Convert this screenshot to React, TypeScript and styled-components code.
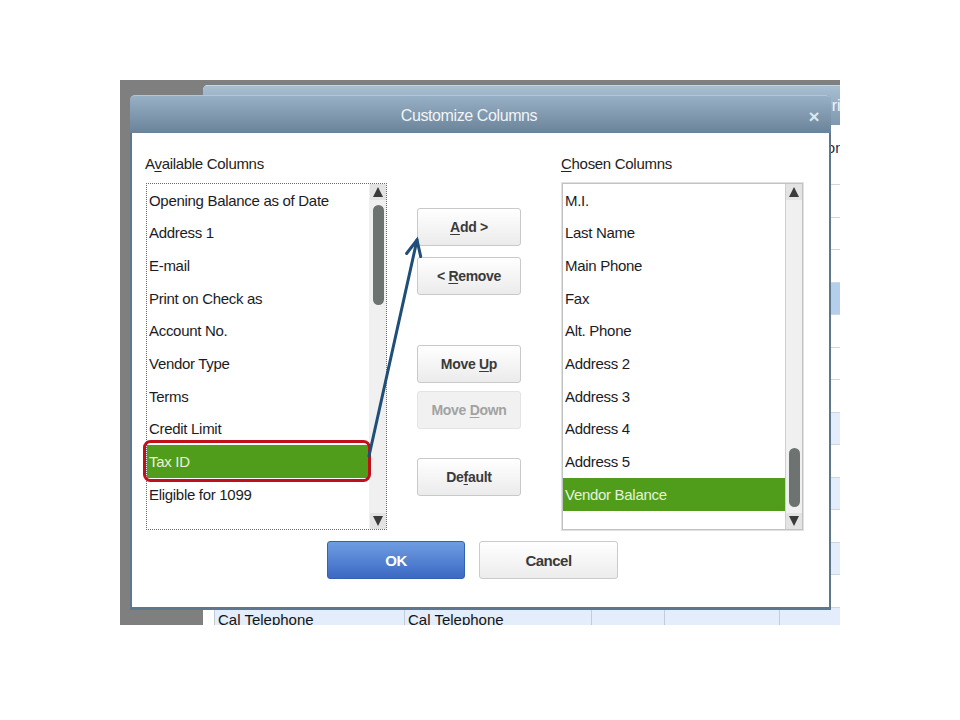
import styled, { createGlobalStyle } from "styled-components";

const GlobalStyle = createGlobalStyle`
  html, body {
    margin: 0;
    padding: 0;
    background: #ffffff;
  }
  body {
    font-family: "Liberation Sans", Arial, sans-serif;
  }
`;

const availableColumns = [
  "Opening Balance as of Date",
  "Address 1",
  "E-mail",
  "Print on Check as",
  "Account No.",
  "Vendor Type",
  "Terms",
  "Credit Limit",
  "Tax ID",
  "Eligible for 1099",
];

const chosenColumns = [
  "M.I.",
  "Last Name",
  "Main Phone",
  "Fax",
  "Alt. Phone",
  "Address 2",
  "Address 3",
  "Address 4",
  "Address 5",
  "Vendor Balance",
];

// widths of the columns in the window behind the dialog
const backCols = [12, 190, 187, 73, 115, 183];

const Page = styled.div`
  position: relative;
  width: 960px;
  height: 720px;
  padding: 80px 0 0 120px;
  box-sizing: border-box;
  background: #ffffff;
`;

const Desktop = styled.div`
  position: relative;
  width: 720px;
  height: 545px;
  background: #7f7f7f;
  overflow: hidden;
`;

/* ---------- window behind the dialog ---------- */

const BackWindow = styled.div`
  position: absolute;
  left: 83px;
  top: 5px;
  width: 760px;
  height: 600px;
  display: flex;
  flex-direction: column;
  background: #ffffff;
  border-radius: 5px 5px 0 0;
  overflow: hidden;
`;

const BackTitle = styled.div`
  flex: none;
  height: 40px;
  box-sizing: border-box;
  display: flex;
  align-items: center;
  padding-left: 618px;
  background: linear-gradient(#a8bed2, #7f98ae);
  border-top: 1px solid #c6d5e3;
  color: #f3f6f9;
  font-size: 16px;
`;

const BackHeadRow = styled.div`
  flex: none;
  height: 60px;
  box-sizing: border-box;
  display: flex;
  border-bottom: 1px solid #d3d7dc;
`;

const BackHeadCell = styled.div<{ $w: number }>`
  flex: none;
  width: ${({ $w }) => $w}px;
  box-sizing: border-box;
  padding: 14px 0 0 24px;
  color: #1b2a4a;
  font-size: 15px;
  white-space: nowrap;
  overflow: hidden;
`;

const BackRow = styled.div<{ $tone: "plain" | "light" | "selected" }>`
  flex: none;
  height: 32.5px;
  box-sizing: border-box;
  display: flex;
  border-bottom: 1px solid #cfd6df;
  background: ${({ $tone }) =>
    $tone === "selected" ? "#b5cfeb" : $tone === "light" ? "#e3edfb" : "#ffffff"};
`;

const BackCell = styled.div<{ $w: number }>`
  flex: none;
  width: ${({ $w }) => $w}px;
  box-sizing: border-box;
  border-right: 1px solid #c3ccd7;
  padding: 3px 0 0 3px;
  color: #141414;
  font-size: 15px;
  white-space: nowrap;
  overflow: hidden;
  &:first-child {
    background: #ffffff;
  }
`;

/* ---------- dialog ---------- */

const Dialog = styled.div`
  position: absolute;
  left: 10px;
  top: 15px;
  width: 701px;
  height: 515px;
  box-sizing: border-box;
  padding: 0 2px 3px 2px;
  display: flex;
  flex-direction: column;
  background: #5d778e;
  border-radius: 5px 5px 0 0;
`;

const TitleBar = styled.div`
  flex: none;
  height: 38px;
  margin: 0 -2px;
  padding-top: 3px;
  display: flex;
  align-items: center;
  border-radius: 5px 5px 0 0;
  background: linear-gradient(#97b0c6, #6a8399);
  border-top: 1px solid #b3c6d6;
  box-sizing: border-box;
`;

const TitleText = styled.div`
  flex: 1;
  padding-left: 11px;
  text-align: center;
  color: #f1f4f7;
  font-size: 16px;
  letter-spacing: -0.4px;
`;

const CloseButton = styled.div`
  flex: none;
  width: 34px;
  text-align: center;
  color: #dfe6ec;
  font-size: 19px;
  font-weight: bold;
  line-height: 1;
`;

const Body = styled.div`
  flex: 1;
  display: flex;
  flex-direction: column;
  background: #ffffff;
  padding: 22px 26px 0 14px;
`;

const Columns = styled.div`
  display: flex;
  align-items: flex-start;
`;

const ListColumn = styled.div`
  flex: none;
  width: 241px;
  display: flex;
  flex-direction: column;
`;

const Label = styled.div`
  height: 18px;
  line-height: 18px;
  margin: 0 0 10px -1px;
  color: #222222;
  font-size: 15px;
  letter-spacing: -0.3px;
`;

const Key = styled.span`
  text-decoration: underline;
  text-underline-offset: 2px;
`;

const ListBox = styled.div<{ $dotted?: boolean }>`
  height: 347px;
  box-sizing: border-box;
  display: flex;
  border: 1px ${({ $dotted }) => ($dotted ? "dotted #6a6a6a" : "solid #c2c2c2")};
  outline: ${({ $dotted }) => ($dotted ? "none" : "1px solid #e1e1e1")};
  background: #ffffff;
`;

const Items = styled.div`
  flex: 1;
  display: flex;
  flex-direction: column;
  overflow: hidden;
`;

const Item = styled.div<{ $selected?: boolean }>`
  flex: none;
  height: 32.67px;
  display: flex;
  align-items: center;
  padding-left: 2px;
  font-size: 15px;
  letter-spacing: -0.3px;
  white-space: nowrap;
  color: ${({ $selected }) => ($selected ? "#e6f2da" : "#1b1b27")};
  background: ${({ $selected }) => ($selected ? "#4f9d1b" : "transparent")};
`;

const Scrollbar = styled.div<{ $line?: boolean }>`
  flex: none;
  width: 16px;
  display: flex;
  flex-direction: column;
  background: #f0f0f0;
  border-left: 1px solid ${({ $line }) => ($line ? "#cfcfcf" : "#f0f0f0")};
`;

const ArrowButton = styled.div`
  flex: none;
  height: 16px;
  display: flex;
  align-items: center;
  justify-content: center;
  background: #e3e3e3;
`;

const Triangle = styled.div<{ $down?: boolean }>`
  width: 0;
  height: 0;
  border-left: 5px solid transparent;
  border-right: 5px solid transparent;
  ${({ $down }) =>
    $down ? "border-top: 10px solid #3a3a3a;" : "border-bottom: 10px solid #3a3a3a;"}
`;

const Track = styled.div`
  flex: 1;
  display: flex;
  flex-direction: column;
  align-items: center;
`;

const Thumb = styled.div<{ $top: number; $height: number }>`
  width: 11px;
  margin-top: ${({ $top }) => $top}px;
  height: ${({ $height }) => $height}px;
  border-radius: 6px;
  background: #6d7371;
`;

const ButtonColumn = styled.div`
  flex: none;
  width: 104px;
  margin: 0 41px 0 30px;
  padding-top: 53px;
  display: flex;
  flex-direction: column;
`;

const SideButton = styled.div<{ $mt: number; $disabled?: boolean }>`
  height: 38px;
  margin-top: ${({ $mt }) => $mt}px;
  box-sizing: border-box;
  display: flex;
  align-items: center;
  justify-content: center;
  border-radius: 3px;
  border: 1px solid ${({ $disabled }) => ($disabled ? "#e3e3e3" : "#c9c9c9")};
  background: ${({ $disabled }) =>
    $disabled ? "#f1f1f1" : "linear-gradient(#ffffff, #ebebeb)"};
  color: ${({ $disabled }) => ($disabled ? "#a2a2a2" : "#3a3a3a")};
  font-size: 14px;
  font-weight: bold;
  letter-spacing: -0.3px;
`;

const Footer = styled.div`
  display: flex;
  gap: 14px;
  margin-top: 11px;
  padding-left: 181px;
`;

const FooterButton = styled.div<{ $primary?: boolean; $w: number }>`
  width: ${({ $w }) => $w}px;
  height: 38px;
  box-sizing: border-box;
  display: flex;
  align-items: center;
  justify-content: center;
  border-radius: 3px;
  border: 1px solid ${({ $primary }) => ($primary ? "#3561b2" : "#cbcbcb")};
  background: ${({ $primary }) =>
    $primary ? "linear-gradient(#6f9de2, #3b69c4)" : "linear-gradient(#ffffff, #ececec)"};
  color: ${({ $primary }) => ($primary ? "#ffffff" : "#3a3a3a")};
  font-size: 15px;
  font-weight: bold;
  letter-spacing: -0.5px;
`;

const Annotation = styled.svg`
  position: absolute;
  left: 0;
  top: 0;
  pointer-events: none;
`;

const backRowCount = 14;

function toneFor(i: number): "plain" | "light" | "selected" {
  if (i === 3) return "selected";
  if (i < 7) return "plain";
  return i % 2 === 1 ? "light" : "plain";
}

const App = () => {
  return (
    <Page>
      <GlobalStyle />
      <Desktop>
        <BackWindow>
          <BackTitle>Print</BackTitle>
          <BackHeadRow>
            {backCols.map((w, i) => (
              <BackHeadCell key={i} $w={w}>
                {i === 5 ? "Contact" : ""}
              </BackHeadCell>
            ))}
          </BackHeadRow>
          {Array.from({ length: backRowCount }).map((_, r) => (
            <BackRow key={r} $tone={toneFor(r)}>
              {backCols.map((w, c) => (
                <BackCell key={c} $w={w}>
                  {r === backRowCount - 1 && (c === 1 || c === 2) ? "Cal Telephone" : ""}
                </BackCell>
              ))}
            </BackRow>
          ))}
        </BackWindow>

        <Dialog>
          <TitleBar>
            <TitleText>Customize Columns</TitleText>
            <CloseButton>×</CloseButton>
          </TitleBar>
          <Body>
            <Columns>
              <ListColumn>
                <Label>
                  A<Key>v</Key>ailable Columns
                </Label>
                <ListBox $dotted>
                  <Items>
                    {availableColumns.map((name, i) => (
                      <Item key={name} $selected={i === 8}>
                        {name}
                      </Item>
                    ))}
                  </Items>
                  <Scrollbar>
                    <ArrowButton>
                      <Triangle />
                    </ArrowButton>
                    <Track>
                      <Thumb $top={5} $height={100} />
                    </Track>
                    <ArrowButton>
                      <Triangle $down />
                    </ArrowButton>
                  </Scrollbar>
                </ListBox>
              </ListColumn>

              <ButtonColumn>
                <SideButton $mt={0}>
                  <span>
                    <Key>A</Key>dd &gt;
                  </span>
                </SideButton>
                <SideButton $mt={11}>
                  <span>
                    &lt; <Key>R</Key>emove
                  </span>
                </SideButton>
                <SideButton $mt={50}>
                  <span>
                    Move <Key>U</Key>p
                  </span>
                </SideButton>
                <SideButton $mt={8} $disabled>
                  <span>
                    Move <Key>D</Key>own
                  </span>
                </SideButton>
                <SideButton $mt={29}>
                  <span>
                    De<Key>f</Key>ault
                  </span>
                </SideButton>
              </ButtonColumn>

              <ListColumn>
                <Label>
                  <Key>C</Key>hosen Columns
                </Label>
                <ListBox>
                  <Items>
                    {chosenColumns.map((name, i) => (
                      <Item key={name} $selected={i === 9}>
                        {name}
                      </Item>
                    ))}
                  </Items>
                  <Scrollbar $line>
                    <ArrowButton>
                      <Triangle />
                    </ArrowButton>
                    <Track>
                      <Thumb $top={248} $height={59} />
                    </Track>
                    <ArrowButton>
                      <Triangle $down />
                    </ArrowButton>
                  </Scrollbar>
                </ListBox>
              </ListColumn>
            </Columns>

            <Footer>
              <FooterButton $primary $w={138}>
                OK
              </FooterButton>
              <FooterButton $w={139}>Cancel</FooterButton>
            </Footer>
          </Body>
        </Dialog>
      </Desktop>

      {/* callout drawn over the screenshot */}
      <Annotation width="960" height="720" viewBox="0 0 960 720">
        <rect
          x="144.5"
          y="441.5"
          width="225"
          height="39"
          rx="6"
          fill="none"
          stroke="#c0101c"
          strokeWidth="3"
        />
        <g stroke="#1f4e79" strokeWidth="3" strokeLinecap="round" fill="none">
          <line x1="369" y1="456" x2="417" y2="240" />
          <polyline points="406.6,253.5 417,240 420.7,256.6" />
        </g>
      </Annotation>
    </Page>
  );
};

export default App;
